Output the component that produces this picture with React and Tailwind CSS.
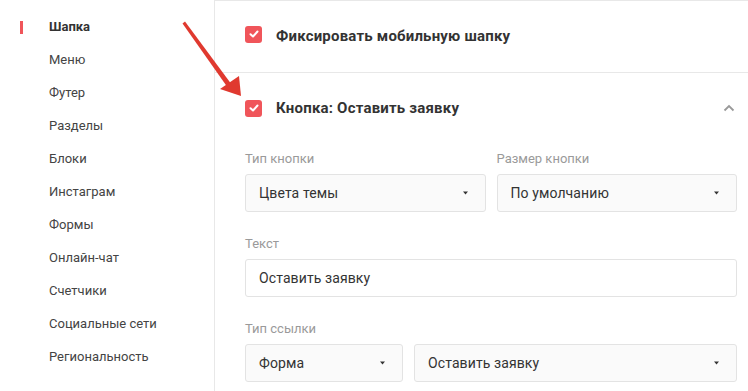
import React from "react";

const menu = ["Шапка","Меню","Футер","Разделы","Блоки","Инстаграм","Формы","Онлайн-чат","Счетчики","Социальные сети","Региональность"];

function Check({ className = "" }) {
  return (
    <div className={"w-[17px] h-[17px] rounded-[3px] bg-[#f0555a] flex items-center justify-center shrink-0 " + className}>
      <svg width="10" height="8" viewBox="0 0 10 8"><path d="M1.5 4.2 L4 6.5 L8.5 1.5" stroke="white" strokeWidth="2" fill="none" strokeLinecap="round" strokeLinejoin="round"/></svg>
    </div>
  );
}

function Caret() {
  return <svg width="5" height="4" viewBox="0 0 5 4" className="shrink-0"><path d="M0 0.5 L5 0.5 L2.5 3.5 Z" fill="#333"/></svg>;
}

function Select({ value, className = "" }) {
  return (
    <div className={"h-[38px] border border-[#e3e3e3] rounded-[3px] bg-[#fafafa] flex items-center justify-between pl-[13px] pr-[17px] text-[14px] tracking-[0.1px] text-[#333] " + className}>
      <span>{value}</span>
      <Caret />
    </div>
  );
}

function Label({ children }) {
  return <div className="text-[13px] text-[#9a9a9a] leading-[16px] mb-[7px]">{children}</div>;
}

export default function App() {
  return (
    <div className="relative w-[748px] h-[391px] bg-white flex overflow-hidden" style={{ fontFamily: "Roboto, 'Noto Sans', sans-serif" }}>
      <div className="w-[214px] shrink-0 pt-[18px]">
        {menu.map((m, i) => (
          <div key={m} className="relative h-[33px] flex items-start">
            {i === 0 && <div className="absolute left-[20px] top-[3px] w-[3px] h-[13px] bg-[#f0555a]" />}
            <span className={"ml-[49px] text-[13px] leading-[18px] " + (i === 0 ? "font-bold text-[#333]" : "text-[#444]")}>{m}</span>
          </div>
        ))}
      </div>
      <div className="flex-1 border-l border-t border-[#e8e8e8] pl-[30px] pr-[11px]">
        <div className="h-[72px] flex items-center gap-[14px] border-b border-[#e8e8e8] -ml-[30px] -mr-[11px] pl-[30px]">
          <Check className="mb-[5px]" />
          <span className="text-[15px] tracking-[0.2px] font-bold text-[#333]">Фиксировать мобильную шапку</span>
        </div>
        <div className="h-[70px] flex items-center gap-[14px]">
          <Check />
          <span className="text-[15px] tracking-[0.2px] font-bold text-[#333] flex-1">Кнопка: Оставить заявку</span>
          <svg width="12" height="8" viewBox="0 0 12 8" className="mr-[2px]"><path d="M1.5 6.5 L6 2 L10.5 6.5" stroke="#999" strokeWidth="1.8" fill="none"/></svg>
        </div>
        <div className="flex gap-[11px] pt-[8px]">
          <div className="flex-1">
            <Label>Тип кнопки</Label>
            <Select value="Цвета темы" />
          </div>
          <div className="flex-1">
            <Label>Размер кнопки</Label>
            <Select value="По умолчанию" />
          </div>
        </div>
        <div className="pt-[24px]">
          <Label>Текст</Label>
          <div className="h-[38px] border border-[#e3e3e3] rounded-[3px] bg-white flex items-center pl-[13px] text-[14px] tracking-[0.1px] text-[#333]">Оставить заявку</div>
        </div>
        <div className="pt-[24px]">
          <Label>Тип ссылки</Label>
          <div className="flex gap-[11px]">
            <Select value="Форма" className="w-[158px]" />
            <Select value="Оставить заявку" className="flex-1" />
          </div>
        </div>
      </div>
      <svg className="absolute left-0 top-0 pointer-events-none" width="748" height="391">
        <path d="M182.5 23.5 L185 21.5 L232 85 L228 88 Z" fill="#e0392f" />
        <path d="M241 96 L220 89 L239 76 Z" fill="#e0392f" />
      </svg>
    </div>
  );
}
